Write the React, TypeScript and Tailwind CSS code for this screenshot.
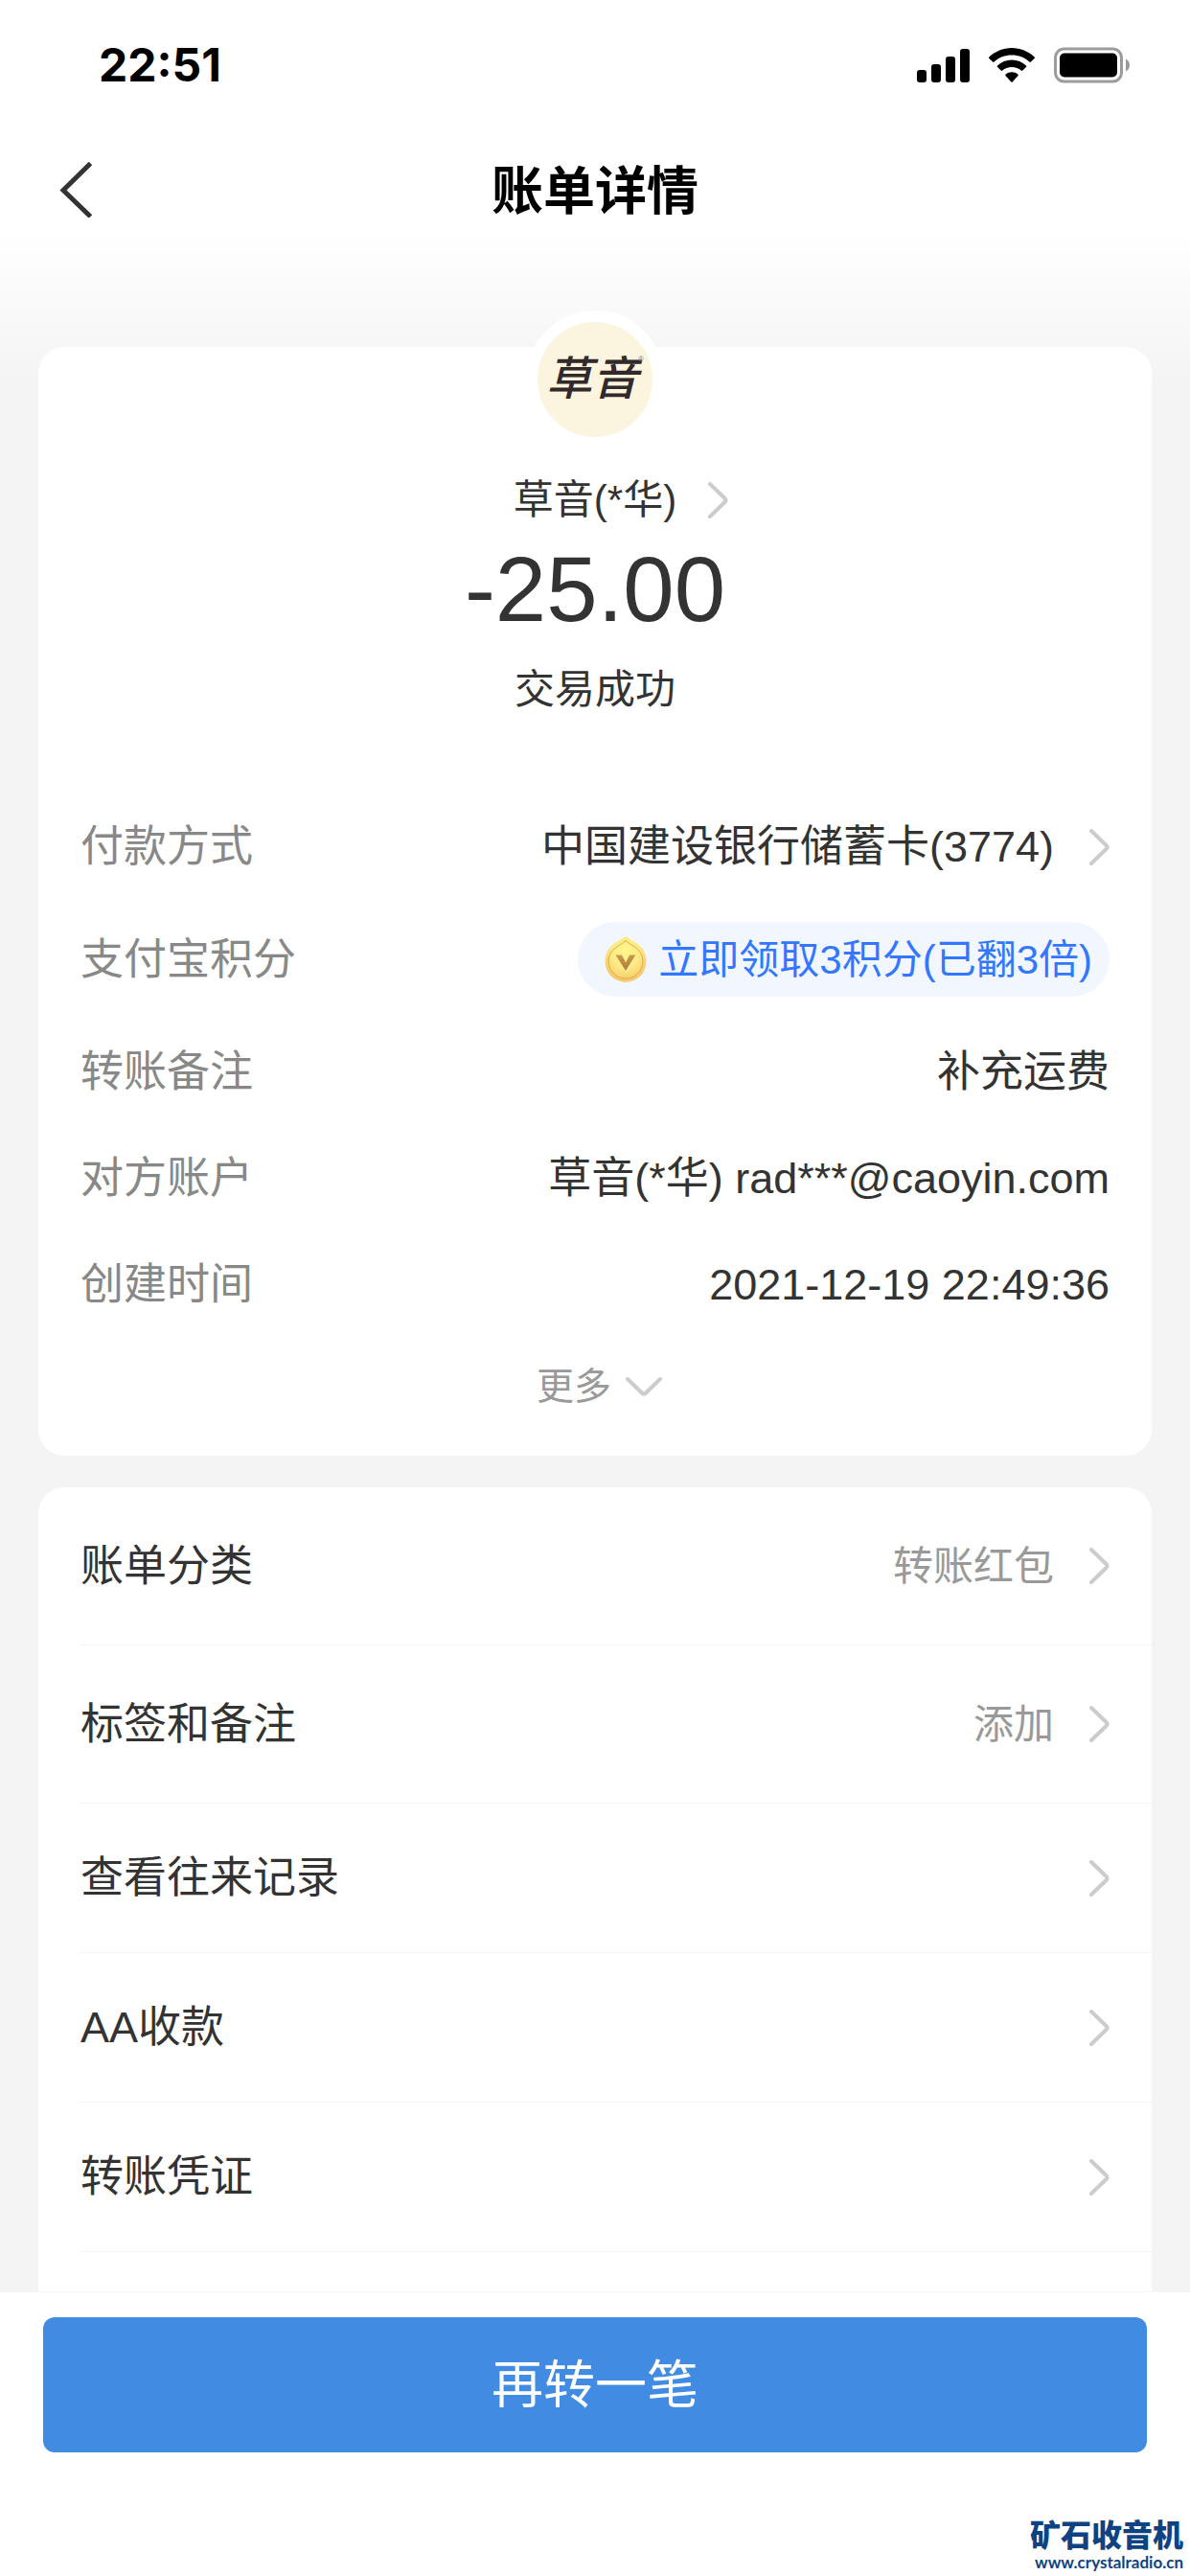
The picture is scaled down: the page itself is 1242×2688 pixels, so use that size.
// src/App.tsx
import { ReactNode } from "react";

const details: { label: string; value: string; arrow?: boolean; points?: boolean }[] = [
  { label: "付款方式", value: "中国建设银行储蓄卡(3774)", arrow: true },
  { label: "支付宝积分", value: "立即领取3积分(已翻3倍)", points: true },
  { label: "转账备注", value: "补充运费" },
  { label: "对方账户", value: "草音(*华) rad***@caoyin.com" },
  { label: "创建时间", value: "2021-12-19 22:49:36" },
];

const actions = [
  { label: "账单分类", value: "转账红包", size: "h-[165px]" },
  { label: "标签和备注", value: "添加", size: "h-[165px]" },
  { label: "查看往来记录", value: "", size: "h-[156px]" },
  { label: "AA收款", value: "", size: "h-[156px]" },
  { label: "转账凭证", value: "", size: "h-[156px]" },
];

function ArrowRight() {
  return (
    <svg className="h-10 w-[22px] shrink-0" viewBox="0 0 22 40" fill="none" aria-hidden="true">
      <path
        d="M3 3 L18.5 18 Q20.5 20 18.5 22 L3 37"
        stroke="#cccccc"
        strokeWidth="4"
        strokeLinecap="round"
      />
    </svg>
  );
}

function ArrowDown() {
  return (
    <svg className="h-[22px] w-10" viewBox="0 0 40 22" fill="none" aria-hidden="true">
      <path
        d="M3 3 L18 17.5 Q20 19.5 22 17.5 L37 3"
        stroke="#cccccc"
        strokeWidth="4"
        strokeLinecap="round"
      />
    </svg>
  );
}

function StatusBar() {
  return (
    <div className="flex h-[132px] items-center justify-between pt-1 pr-[62px] pl-[103px]">
      <span className="font-['Inter'] text-[48px] leading-[60px] font-bold text-black">22:51</span>
      <div className="flex items-center gap-5">
        <svg className="h-[38px] w-[55px]" viewBox="0 0 55 38" aria-hidden="true">
          <rect x="0" y="24" width="10" height="13" rx="3" />
          <rect x="15" y="18" width="10" height="19" rx="3" />
          <rect x="30" y="10" width="10" height="27" rx="3" />
          <rect x="45" y="2" width="10" height="35" rx="3" />
        </svg>
        <svg className="h-[38px] w-12" viewBox="0 0 48 38" aria-hidden="true">
          <path d="M24 1C33.2 1 41.4 4.6 47.6 10.4Q48.4 11.1 47.6 11.9L43.9 15.6Q43.2 16.3 42.4 15.6C37.6 11.2 31.1 8.6 24 8.6S10.4 11.2 5.6 15.6Q4.8 16.3 4.1 15.6L.4 11.9Q-.4 11.1.4 10.4C6.6 4.6 14.8 1 24 1Z" />
          <path d="M24 13.6C29.8 13.6 35 15.8 39 19.4Q39.8 20.1 39 20.9L35.3 24.6Q34.6 25.3 33.8 24.6C31.2 22.3 27.8 21 24 21S16.8 22.3 14.2 24.6Q13.4 25.3 12.7 24.6L9 20.9Q8.2 20.1 9 19.4C13 15.8 18.2 13.6 24 13.6Z" />
          <path d="M24 26.2C26.4 26.2 28.6 27 30.4 28.5Q31.2 29.2 30.5 30L24.7 36.5Q24 37.2 23.3 36.5L17.5 30Q16.8 29.2 17.6 28.5C19.4 27 21.6 26.2 24 26.2Z" />
        </svg>
        <svg className="h-[38px] w-20" viewBox="0 0 80 38" aria-hidden="true">
          <rect x="1.5" y="2" width="69" height="34" rx="9" fill="none" stroke="#9b9b9b" strokeWidth="3" />
          <rect x="6" y="6.5" width="60" height="25" rx="5" />
          <path d="M75 12.5Q79 14.5 79 19T75 25.5Z" fill="#9b9b9b" />
        </svg>
      </div>
    </div>
  );
}

function NavBar() {
  return (
    <div className="grid h-[132px] grid-cols-[1fr_auto_1fr] items-center px-[60px]">
      <button type="button" aria-label="返回" className="w-10">
        <svg className="h-[58px] w-10" viewBox="0 0 40 58" fill="none">
          <path d="M34.5 1.5 L6 29.500 L34.500 57" stroke="#333333" strokeWidth="5" />
        </svg>
      </button>
      <h1 className="pt-1 text-[54px] leading-[72px] font-bold text-black">账单详情</h1>
    </div>
  );
}

function ShopAvatar() {
  return (
    <div className="-mt-[38px] flex size-36 items-center justify-center rounded-full border-12 border-white bg-[#fbf5e0]">
      <span className="relative pr-1.5 text-[48px] leading-[60px] font-medium text-[#33292a] italic">
        草音
        <sup className="absolute top-1 right-0 text-[8px] leading-[10px] text-[#8b8278] not-italic">®</sup>
      </span>
    </div>
  );
}

function PointsCoin() {
  return (
    <svg className="h-12 w-11 shrink-0" viewBox="0 0 44 48" aria-hidden="true">
      <defs>
        <radialGradient id="coin" cx="0.5" cy="0.35" r="0.65">
          <stop offset="0" stopColor="#fff78a" />
          <stop offset="0.55" stopColor="#fde983" />
          <stop offset="1" stopColor="#f6c566" />
        </radialGradient>
        <linearGradient id="mark" x1="0" y1="0" x2="0" y2="1">
          <stop offset="0" stopColor="#c99a4c" />
          <stop offset="1" stopColor="#b07d30" />
        </linearGradient>
      </defs>
      <path
        d="M20 .9Q22-.6 24 .9C27.500 4 31 5.300 34.500 8C40.500 12.500 43.500 19 43.500 26.200A21.500 21.500 0 0 1 .5 26.200C.5 19 3.500 12.500 9.500 8C13 5.300 16.500 4 20 .9Z"
        fill="url(#coin)"
      />
      <path
        d="M22 4.500C25 7.500 29 9 32.500 11.800C37.500 15.800 40 20.500 40 26.200A18 18 0 0 1 4 26.200C4 20.500 6.500 15.800 11.500 11.800C15 9 19 7.500 22 4.500Z"
        fill="none"
        stroke="#dda94e"
        strokeWidth="1"
      />
      <path d="M12 20H18L22 28L26 20H33L22.500 37.500Z" fill="#fff6c2" />
      <path d="M11.500 19.500H18L22 27.500L26 19.500H32.500L22 36Z" fill="url(#mark)" />
    </svg>
  );
}

function Card({ children, className }: { children: ReactNode; className: string }) {
  return <section className={`bg-white ${className}`}>{children}</section>;
}

export default function App() {
  return (
    <div className="flex min-h-screen flex-col bg-[#f4f4f4] bg-[linear-gradient(to_bottom,#ffffff_240px,#f4f4f4_400px)] font-['Liberation_Sans','Noto_Sans_CJK_SC',sans-serif] text-[#333333]">
      <header>
        <StatusBar />
        <NavBar />
      </header>

      <main className="flex flex-1 flex-col px-10 pt-[98px]">
        <Card className="flex flex-col items-center rounded-[27px] px-11 pb-[45px]">
          <ShopAvatar />
          <a href="#shop" className="relative mt-6 text-[42px] leading-[60px]">
            草音(*华)
            <span className="absolute top-2.5 left-full ml-8">
              <ArrowRight />
            </span>
          </a>
          <p className="mt-[15px] text-[96px] leading-[96px]">-25.00</p>
          <p className="mt-[27px] text-[42px] leading-[60px]">交易成功</p>

          <dl className="mt-[102px] flex w-full flex-col gap-12 text-[45px] leading-[63px]">
            {details.map((item) => (
              <div key={item.label} className={`flex items-center justify-between ${item.points ? "h-[76px]" : ""}`}>
                <dt className="text-[#888888]">{item.label}</dt>
                <dd>
                  {item.points ? (
                    <button
                      type="button"
                      className="flex h-[78px] items-center gap-3 rounded-full bg-[#f2f7ff] pr-[18px] pl-7 text-[42px] text-[#3377ff]"
                    >
                      <PointsCoin />
                      {item.value}
                    </button>
                  ) : item.arrow ? (
                    <a href="#card" className="flex items-center gap-9">
                      {item.value}
                      <ArrowRight />
                    </a>
                  ) : (
                    item.value
                  )}
                </dd>
              </div>
            ))}
          </dl>

          <button type="button" className="mt-12 flex items-center gap-3.5 pl-2.5 text-[39px] leading-[54px] text-[#999999]">
            更多
            <ArrowDown />
          </button>
        </Card>

        <Card className="mt-[33px] flex-1 rounded-t-[27px] pl-11">
          {actions.map((item) => (
            <a
              key={item.label}
              href="#action"
              className={`flex items-center border-b border-[#f3f3f3] pr-11 ${item.size}`}
            >
              <span className="flex-1 text-[45px] leading-[63px]">{item.label}</span>
              <span className="mr-9 text-[42px] leading-[63px] text-[#999999]">{item.value}</span>
              <ArrowRight />
            </a>
          ))}
        </Card>
      </main>

      <footer className="h-[297px] border-t border-[#f5f5f5] bg-white px-[45px] pt-[26px]">
        <button
          type="button"
          className="h-[141px] w-full rounded-xl bg-[#418ce2] text-[54px] leading-[72px] text-white"
        >
          再转一笔
        </button>
        <div className="-mr-[38px] mt-[69px] flex flex-col items-end text-[#0d4383]">
          <span className="text-[32px] leading-9 font-black">矿石收音机</span>
          <span className="font-['Lato'] text-[17px] leading-5 font-bold">www.crystalradio.cn</span>
        </div>
      </footer>
    </div>
  );
}
